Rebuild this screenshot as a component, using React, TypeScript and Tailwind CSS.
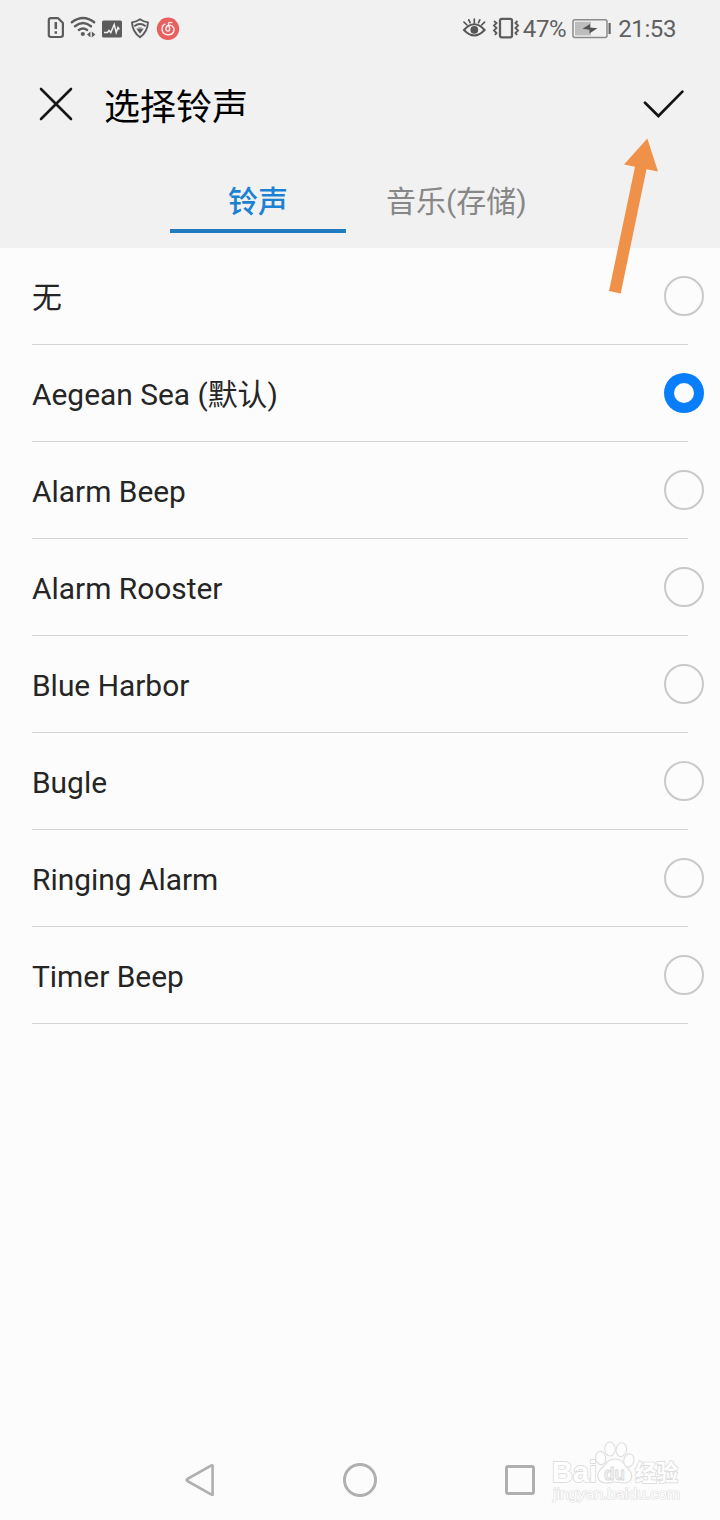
import React from "react";

const ringtones = [
  "无",
  "Aegean Sea (默认)",
  "Alarm Beep",
  "Alarm Rooster",
  "Blue Harbor",
  "Bugle",
  "Ringing Alarm",
  "Timer Beep",
];

function SimAlertIcon() {
  return (
    <svg className="h-10 w-6" viewBox="0 0 24 40" fill="none" stroke="#5c5c5c" strokeWidth="2.2" strokeLinejoin="round">
      <path d="M11 10.2H18.2L22.9 15V26.8Q22.9 29 20.6 29H11Q8.8 29 8.8 26.8V12.4Q8.8 10.2 11 10.2Z" />
      <path d="M15.8 14V21M15.8 23.2V25.8" strokeWidth="2.5" />
    </svg>
  );
}

function WifiIcon() {
  return (
    <svg className="ml-1.5 h-10 w-[26px]" viewBox="70 8 26 40" fill="none" stroke="#5c5c5c" strokeWidth="2.4" strokeLinecap="round">
      <path d="M71.8 22.3Q83 13.7 94.2 22.3M75 26.3Q83 19.9 91 26.3M78.8 29.9Q83 27 87.2 29.9" />
      <circle cx="82.8" cy="34" r="2.1" fill="#5c5c5c" stroke="none" />
      <path d="M90.4 31.5V37.5L87 34.5ZM91.8 31.5V37.5L95.3 34.5Z" fill="#5c5c5c" stroke="none" />
    </svg>
  );
}

function ActivityIcon() {
  return (
    <svg className="ml-1.5 h-10 w-5" viewBox="0 0 20 40" fill="none">
      <rect x="0" y="12.5" width="20" height="17" rx="1.6" fill="#5c5c5c" />
      <path d="M2 24.5H5.5L7 22.5L8.8 24.5L12.2 16.5L14.2 24.5L16 19.5L17.3 21.5" stroke="#f0f0f0" strokeWidth="1.5" />
    </svg>
  );
}

function ShieldIcon() {
  return (
    <svg className="ml-2 h-10 w-5" viewBox="0 0 20 40" fill="none" stroke="#5c5c5c" strokeWidth="1.9" strokeLinejoin="round">
      <path d="M10 11.3Q13.5 13.7 18 14.4Q17.5 24 10 29.3Q2.5 24 2 14.4Q6.5 13.7 10 11.3Z" />
      <path d="M4.3 18.2Q10 13.8 15.7 18.2" strokeWidth="1.8" />
      <path d="M6.4 20.8Q10 17.6 13.6 20.8L10 25.8Z" fill="#5c5c5c" stroke="none" />
      <path d="M7.3 20.8Q10 19 12.7 20.8" stroke="#f1f1f1" strokeWidth="0.7" />
    </svg>
  );
}

function MusicAppIcon() {
  return (
    <svg className="ml-1.5 h-10 w-6" viewBox="0 0 24 40" fill="none">
      <circle cx="12" cy="20.8" r="11.2" fill="#e8605f" />
      <path d="M9 16.2C4.7 18.2 4.8 26 11.3 26.7C19 27.3 20.2 18.6 14.2 17.4C9.8 16.7 8.4 23 11.8 23.1C14.8 23 13.5 19.5 12.5 16.4Q12 13.8 15.8 14.6" stroke="#fff0ef" strokeWidth="1.4" strokeLinecap="round" />
    </svg>
  );
}

function EyeIcon() {
  return (
    <svg className="h-10 w-[25px]" viewBox="0 0 25 40" fill="none" stroke="#555" strokeWidth="2" strokeLinecap="round">
      <path d="M2 22Q12.3 10.4 22.6 22Q12.3 33 2 22Z" />
      <path d="M12.3 11V15M2 14.2L5 17M6.8 11.8L8.1 14.7M17.8 11.8L16.5 14.7M22.6 14.2L19.6 17" strokeWidth="1.7" />
      <circle cx="12.3" cy="21.8" r="3.9" fill="#555" stroke="none" />
    </svg>
  );
}

function VibrateIcon() {
  return (
    <svg className="ml-[5px] h-10 w-7" viewBox="0 0 28 40" fill="none" stroke="#5c5c5c" strokeWidth="2">
      <rect x="8" y="10.8" width="12" height="18.5" rx="1.8" strokeWidth="2.3" />
      <path d="M2 13L4.5 15L2 17.5L4.5 20L2 22.5L4.5 25L3 27M25.5 13L23.5 15L26 17.5L23.5 20L26 22.5L23.5 25L25 27" strokeWidth="1.9" />
    </svg>
  );
}

function BatteryIcon() {
  return (
    <svg className="ml-1.5 h-10 w-10" viewBox="0 0 40 40" fill="none">
      <rect x="1" y="11.8" width="34" height="17.6" rx="2" stroke="#8b8b8b" strokeWidth="1.5" fill="#f1f1f1" />
      <rect x="3" y="13.8" width="16" height="13.6" fill="#bdbdbd" />
      <path d="M10.5 20.8L18 16V19.5L25.5 20.3L17.4 25.5V21.8Z" fill="#555" />
      <path d="M37.6 15V26" stroke="#666" strokeWidth="2.2" />
    </svg>
  );
}

function StatusBar() {
  return (
    <div className="flex h-14 items-start justify-between pt-2 pr-[44px] pl-10">
      <div className="flex">
        <SimAlertIcon />
        <WifiIcon />
        <ActivityIcon />
        <ShieldIcon />
        <MusicAppIcon />
      </div>
      <div className="flex items-start text-[24px] leading-[42px] tracking-[-0.4px] text-[#606060]">
        <EyeIcon />
        <VibrateIcon />
        <span className="ml-[3px]">47%</span>
        <BatteryIcon />
        <span className="ml-1.5">21:53</span>
      </div>
    </div>
  );
}

function ArrowPointer() {
  return (
    <svg className="pointer-events-none absolute top-[134px] left-[600px] h-[164px] w-[64px]" viewBox="600 134 64 164">
      <path d="M647.3 138.5L658 171.5L646.5 169.3L620.7 293.5L609 291L635 166.8L624 164.5Z" fill="#f0914a" />
    </svg>
  );
}

function Radio({ selected }: { selected: boolean }) {
  return selected ? (
    <span className="flex size-10 items-center justify-center rounded-full bg-[#087efa]">
      <span className="size-5 rounded-full bg-[#fcfcfc]" />
    </span>
  ) : (
    <span className="size-10 rounded-full border-2 border-[#c9c9c9]" />
  );
}

function Watermark() {
  return (
    <svg className="absolute top-[1436px] left-[548px] h-[70px] w-[136px]" viewBox="548 1436 136 70" fill="#fefefe" stroke="#dedede" strokeWidth="1.1">
      <g strokeWidth="1.8" paintOrder="stroke" fontFamily="'Liberation Sans', 'Noto Sans CJK SC', sans-serif" fontWeight="bold">
        <text x="552" y="1482" fontSize="29" textLength="45" lengthAdjust="spacingAndGlyphs">Bai</text>
        <text x="635" y="1481" fontSize="23" textLength="43" lengthAdjust="spacingAndGlyphs">经验</text>
        <text x="553" y="1498.5" fontSize="14" fontWeight="normal" strokeWidth="1.2" textLength="127" lengthAdjust="spacingAndGlyphs">jingyan.baidu.com</text>
      </g>
      <ellipse cx="600.7" cy="1458" rx="5" ry="6.7" transform="rotate(-12 600.7 1458)" />
      <ellipse cx="609.9" cy="1449" rx="5.2" ry="7" />
      <ellipse cx="621.3" cy="1449.7" rx="5.2" ry="7" transform="rotate(10 621.3 1449.7)" />
      <ellipse cx="628.8" cy="1460.5" rx="5" ry="6.7" transform="rotate(12 628.8 1460.5)" />
      <path d="M615 1459C607 1459 606 1465 601 1469C595 1475 598 1483 606 1483C611 1483 612 1482 615 1482C619 1482 621 1483 624 1483C632 1483 634 1475 629 1470C624 1465 623 1459 615 1459Z" />
      <text x="604" y="1480" fontSize="18" fontWeight="bold" fontFamily="'Liberation Sans', sans-serif" fill="#f4f4f4" stroke="#dadada" strokeWidth="0.9" textLength="21" lengthAdjust="spacingAndGlyphs">du</text>
    </svg>
  );
}

export default function App() {
  return (
    <div className="relative flex h-[1520px] w-[720px] flex-col overflow-hidden bg-[#fcfcfc] font-['Roboto','Noto_Sans_CJK_SC',sans-serif]">
      <header className="flex h-[248px] flex-col bg-[#f1f1f1]">
        <StatusBar />
        <div className="flex h-24 items-center pr-9 pl-[39px]">
          <svg className="size-[34px]" viewBox="0 0 34 34" fill="none" stroke="#171717" strokeWidth="2.6" strokeLinecap="round">
            <path d="M2 2L32 32M32 2L2 32" />
          </svg>
          <h1 className="ml-[31px] pt-[7px] text-[36px] leading-[52px] text-black">选择铃声</h1>
          <svg className="ml-auto h-[30px] w-[41px]" viewBox="0 0 41 30" fill="none" stroke="#151515" strokeWidth="2.7" strokeLinecap="round">
            <path d="M2 13.8L15.4 27L39.4 2.6" />
          </svg>
        </div>
        <nav className="flex h-24 pl-[170px] text-[30px] leading-[44px]">
          <div className="flex h-[81px] w-44 justify-center border-b-4 border-[#217bc1] pt-7 font-medium text-[#1b82d1]">铃声</div>
          <div className="ml-10 pt-7 text-[#878787]">音乐(存储)</div>
        </nav>
      </header>
      <main className="flex-1">
        {ringtones.map((name, index) => (
          <div key={name} className="flex h-[97px] pl-8">
            <div className="flex w-[656px] shrink-0 items-center border-b border-[#d3d3d3] pt-1 text-[29.9px] text-[#252525]">{name}</div>
            <div className="-ml-6 flex items-center pb-0.5">
              <Radio selected={index === 1} />
            </div>
          </div>
        ))}
      </main>
      <footer className="flex h-20 items-center pl-[185px]">
        <svg className="size-8" viewBox="0 0 32 32" fill="none" stroke="#b0b0b0" strokeWidth="2.6" strokeLinejoin="round">
          <path d="M27.6 1.5V30.5Q28 31 26.5 30.7L2.3 17Q1 16 2.3 15L26.5 1.3Z" />
        </svg>
        <span className="ml-[126px] size-[34px] rounded-full border-3 border-[#b0b0b0]" />
        <span className="ml-32 size-[30px] rounded-[3px] border-3 border-[#b0b0b0]" />
      </footer>
      <ArrowPointer />
      <Watermark />
    </div>
  );
}
